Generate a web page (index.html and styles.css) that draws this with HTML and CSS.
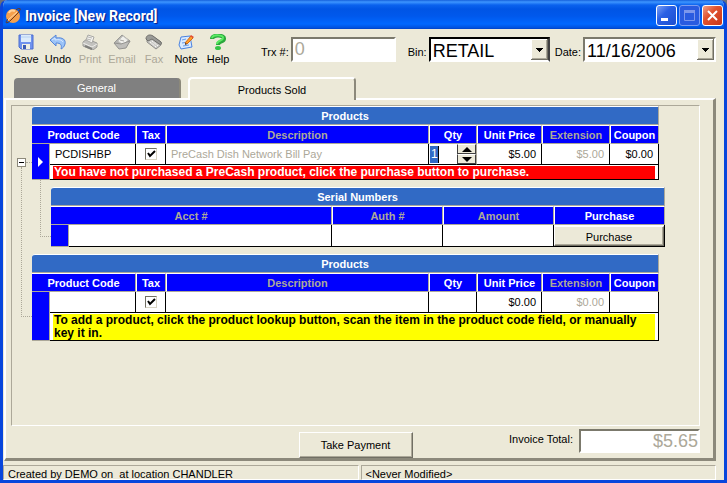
FILE: index.html
```html
<!DOCTYPE html>
<html lang="en">
<head>
    <meta charset="UTF-8">
    <meta name="viewport" content="width=device-width, initial-scale=1.0">
    <title>Invoice [New Record]</title>
    <link rel="stylesheet" href="styles.css">
</head>
<body>

    <div class="window">
        <header class="titlebar">
            <svg class="logo" width="16" height="16" viewBox="0 0 16 16">
                <circle cx="8" cy="8" r="7" fill="#f5a04c"/>
                <path d="M4 5c1-3 4-3 6-2" stroke="#ffd29a" stroke-width="2" fill="none"/>
                <path d="M3 11C-1 16 2 16 6 12L13 5c4-5 2-6-2-3" stroke="#6b3a1c" stroke-width="1" fill="none"/>
                <path d="M3 12L12 4" stroke="#ffd9a8" stroke-width="1"/>
            </svg>
            <h1>Invoice [New Record]</h1>
            <div class="window-buttons">
                <button class="win-btn" aria-label="Minimize">
                    <svg width="19" height="19" viewBox="0 0 19 19"><path d="M4 13.500h7" stroke="#fff" stroke-width="3"/></svg>
                </button>
                <button class="win-btn win-disabled" aria-label="Maximize" disabled>
                    <svg width="19" height="19" viewBox="0 0 19 19"><path d="M4.500 5v9.500h10V5" stroke="#7d97ec" fill="none"/><path d="M4 5.500h11" stroke="#7d97ec" stroke-width="3"/></svg>
                </button>
                <button class="win-btn win-close" aria-label="Close">
                    <svg width="19" height="19" viewBox="0 0 19 19"><path d="M5 5l9 9M14 5l-9 9" stroke="#fff" stroke-width="2"/></svg>
                </button>
            </div>
        </header>

        <!-- Toolbar -->
        <div class="toolbar">
            <div class="tools">
                <button class="tool">
                    <svg width="18" height="16" viewBox="0 0 18 16">
                        <path d="M2 1h14v14H4l-2-2z" fill="#6f92ee" stroke="#4a6cd0"/>
                        <path d="M4 1h10v7H4z" fill="#dcebfa"/>
                        <path d="M4 3h10" stroke="#b6d0f2"/>
                        <path d="M5 10h8v5H5z" fill="#f0efe2"/>
                        <path d="M6 11h3v4H6z" fill="#3a5ab4"/>
                    </svg>
                    Save
                </button>
                <button class="tool">
                    <svg width="18" height="16" viewBox="0 0 18 16">
                        <path d="M1 6l6-5v3c7-1 10 2 9 6-1 3-2 4-4 5 1-4 0-6-5-6v3z" fill="#9cc4f8" stroke="#5585d8"/>
                        <path d="M3 6l3-2v2c4-1 7 0 8 2" stroke="#d8e8ff" fill="none"/>
                    </svg>
                    Undo
                </button>
                <button class="tool" disabled>
                    <svg width="18" height="16" viewBox="0 0 18 16">
                        <path d="M2 8l4-3 10 4v4l-4 3-10-4z" fill="#b9b9b9" stroke="#888"/>
                        <path d="M5 6l2-5 6 2-2 6z" fill="#f5f5f5" stroke="#999"/>
                        <path d="M7 3l4 1M6 5l4 1" stroke="#aaa"/>
                        <path d="M2 9l9 4 5-3" stroke="#eee" fill="none"/>
                        <path d="M4 12l7 3" stroke="#666" stroke-width="2"/>
                    </svg>
                    Print
                </button>
                <button class="tool" disabled>
                    <svg width="18" height="16" viewBox="0 0 18 16">
                        <path d="M1 9l8-8 8 6-5 7z" fill="#a8a8a8" stroke="#888"/>
                        <path d="M5 7l5-5 5 4-5 5z" fill="#f2f2f2" stroke="#bbb"/>
                        <path d="M1 9l7 1 9-3-4 7-7 1z" fill="#b4b4b4" stroke="#808080"/>
                        <path d="M7 6l4 1" stroke="#999"/>
                    </svg>
                    Email
                </button>
                <button class="tool" disabled>
                    <svg width="18" height="16" viewBox="0 0 18 16">
                        <path d="M2 5l5-3 9 6v3l-5 4-9-7z" fill="#c4c4c4" stroke="#777"/>
                        <path d="M1 5c0-4 4-5 7-3l8 6c1 2 0 3-2 2L7 5 3 7z" fill="#888" stroke="#505050"/>
                        <path d="M5 8l6 5M7 7l6 5" stroke="#fff" stroke-dasharray="2 1"/>
                    </svg>
                    Fax
                </button>
                <button class="tool">
                    <svg width="18" height="16" viewBox="0 0 18 16">
                        <path d="M4 3l9-1 2 11-11 2-2-4z" fill="#d8eaff" stroke="#4a82df"/>
                        <path d="M5 6l4-1M5 9l6-1M6 12l6-1" stroke="#6a9be8"/>
                        <path d="M8 9L14 2l2 2-6 6z" fill="#ff9d2c" stroke="#d26a14"/>
                        <path d="M14 1l3 2-1 1-3-2z" fill="#e34a36"/>
                        <path d="M8 11v-2l2 1z" fill="#333"/>
                    </svg>
                    Note
                </button>
                <button class="tool">
                    <svg width="18" height="16" viewBox="0 0 18 16">
                        <path d="M3 5c0-5 13-4 12 0 0 3-6 2-6 6" stroke="#2aa83c" stroke-width="4" fill="none"/>
                        <path d="M3 4c1-4 12-3 11 0 0 3-6 2-6 6" stroke="#5bea63" stroke-width="2" fill="none"/>
                        <ellipse cx="9" cy="14" rx="3" ry="2" fill="#35c447"/>
                    </svg>
                    Help
                </button>
            </div>
            <div class="field field-trx">
                <label for="trx">Trx #:</label>
                <input type="text" id="trx" class="sunken big" value="0" disabled>
            </div>
            <div class="field field-bin">
                <label for="bin">Bin:</label>
                <select id="bin" class="sunken big"><option>RETAIL</option></select>
            </div>
            <div class="field field-date">
                <label for="date">Date:</label>
                <select id="date" class="sunken big"><option>11/16/2006</option></select>
            </div>
        </div>

        <!-- Tabs -->
        <div class="tabs">
            <button class="tab">General</button>
            <button class="tab tab-active">Products Sold</button>
        </div>

        <main class="panel">
            <div class="records">
                <div class="tree">
                    <div class="expand-row">
                        <button class="expander" aria-label="Collapse"></button>
                        <span class="stub"></span>
                    </div>
                    <div class="trunk"></div>
                </div>

                <div class="nodes">
                    <table class="grid products">
                        <caption>Products</caption>
                        <colgroup>
                            <col class="c-mark"><col class="c-code"><col class="c-tax"><col>
                            <col class="c-qty"><col class="c-price"><col class="c-ext"><col class="c-coupon">
                        </colgroup>
                        <thead>
                            <tr>
                                <th colspan="2">Product Code</th>
                                <th>Tax</th>
                                <th class="dim">Description</th>
                                <th>Qty</th>
                                <th>Unit Price</th>
                                <th class="dim">Extension</th>
                                <th>Coupon</th>
                            </tr>
                        </thead>
                        <tbody>
                            <tr>
                                <td class="mark" rowspan="2"><svg width="5" height="10" viewBox="0 0 5 10"><path d="M0 0l5 5-5 5z" fill="#fff"/></svg></td>
                                <td>PCDISHBP</td>
                                <td class="center"><input type="checkbox" aria-label="Tax" checked></td>
                                <td class="dim">PreCash Dish Network Bill Pay</td>
                                <td class="qty-cell">
                                    <div class="qty">
                                        <input type="text" aria-label="Qty" value="1">
                                        <div class="spin">
                                            <button aria-label="Increase"><svg width="10" height="5" viewBox="0 0 10 5"><path d="M0 5l5-5 5 5z"/></svg></button>
                                            <button aria-label="Decrease"><svg width="10" height="5" viewBox="0 0 10 5"><path d="M0 0h10l-5 5z"/></svg></button>
                                        </div>
                                    </div>
                                </td>
                                <td class="num">$5.00</td>
                                <td class="num dim">$5.00</td>
                                <td class="num">$0.00</td>
                            </tr>
                            <tr>
                                <td class="message" colspan="7"><p class="error">You have not purchased a PreCash product, click the purchase button to purchase.</p></td>
                            </tr>
                        </tbody>
                    </table>

                    <div class="child">
                        <div class="child-line"></div>
                        <table class="grid serials">
                            <caption>Serial Numbers</caption>
                            <colgroup>
                                <col class="c-mark"><col><col class="c-serial"><col class="c-serial"><col class="c-serial">
                            </colgroup>
                            <thead>
                                <tr>
                                    <th class="dim" colspan="2">Acct #</th>
                                    <th class="dim">Auth #</th>
                                    <th class="dim">Amount</th>
                                    <th>Purchase</th>
                                </tr>
                            </thead>
                            <tbody>
                                <tr>
                                    <td class="mark"></td>
                                    <td></td>
                                    <td></td>
                                    <td></td>
                                    <td class="button-cell"><button class="raised">Purchase</button></td>
                                </tr>
                            </tbody>
                        </table>
                    </div>

                    <table class="grid products">
                        <caption>Products</caption>
                        <colgroup>
                            <col class="c-mark"><col class="c-code"><col class="c-tax"><col>
                            <col class="c-qty"><col class="c-price"><col class="c-ext"><col class="c-coupon">
                        </colgroup>
                        <thead>
                            <tr>
                                <th colspan="2">Product Code</th>
                                <th>Tax</th>
                                <th class="dim">Description</th>
                                <th>Qty</th>
                                <th>Unit Price</th>
                                <th class="dim">Extension</th>
                                <th>Coupon</th>
                            </tr>
                        </thead>
                        <tbody>
                            <tr>
                                <td class="mark" rowspan="2"></td>
                                <td></td>
                                <td class="center"><input type="checkbox" aria-label="Tax" checked></td>
                                <td></td>
                                <td></td>
                                <td class="num">$0.00</td>
                                <td class="num dim">$0.00</td>
                                <td></td>
                            </tr>
                            <tr>
                                <td class="message" colspan="7"><p class="hint">To add a product, click the product lookup button, scan the item in the product code field, or manually key it in.</p></td>
                            </tr>
                        </tbody>
                    </table>
                </div>
            </div>

            <div class="payment">
                <button class="raised pay">Take Payment</button>
                <div class="total">
                    <label for="total">Invoice Total:</label>
                    <input type="text" id="total" class="sunken big" value="$5.65" disabled>
                </div>
            </div>
        </main>

        <footer class="statusbar">
            <span>Created by DEMO on&nbsp; at location CHANDLER</span>
            <span>&lt;Never Modified&gt;</span>
        </footer>
    </div>

</body>
</html>
```
FILE: styles.css
```css
* {
    box-sizing: border-box;
}

body {
    margin: 0;
    background-color: #6b6f78;
    font-family: "Liberation Sans", Arial, sans-serif;
    font-size: 11px;
    color: #000;
}

button, input, select {
    font: inherit;
    color: inherit;
    margin: 0;
    padding: 0;
    border-radius: 0;
}

p {
    margin: 0;
}

.window {
    display: flex;
    flex-direction: column;
    min-height: 100vh;
    background-color: #ece9d8;
    border: 3px solid #0846dc;
    border-top: none;
    border-radius: 7px 7px 0 0;
    overflow: hidden;
}

/* Title bar */
.titlebar {
    display: flex;
    align-items: center;
    gap: 4px;
    height: 29px;
    margin: 0 -3px;
    padding: 2px 4px 0 5px;
    background: linear-gradient(#1560dc 0, #3d95ff 2px, #0a62ee 5px, #0055e5 9px, #0058ec 16px, #0068ff 24px, #0050dc 28px, #0040c0 29px);
}

.titlebar h1 {
    flex: 1;
    margin: 0;
    font-family: Roboto, sans-serif;
    font-size: 14px;
    color: #fff;
    text-shadow: 1px 1px 1px #0a1883;
}

.window-buttons {
    display: flex;
    gap: 2px;
}

.win-btn {
    width: 21px;
    height: 21px;
    border: 1px solid #fff;
    border-radius: 3px;
    background: linear-gradient(135deg, #7ba0f5, #2a60e4 40%, #1c4fd0);
}

.win-btn svg {
    display: block;
}

.win-disabled {
    border-color: #7d9cf0;
    background: #2a5be0;
}

.win-close {
    background: linear-gradient(135deg, #f0a088, #e1522e 40%, #c8371a);
}

/* Toolbar */
.toolbar {
    display: flex;
    align-items: flex-start;
    height: 48px;
    padding: 5px 8px 0 7px;
}

.tools {
    display: flex;
}

.tool {
    display: flex;
    flex-direction: column;
    align-items: center;
    gap: 2px;
    width: 32px;
    border: none;
    background: none;
    line-height: 14px;
}

.tool:disabled {
    color: #aca899;
}

.tool:disabled svg {
    opacity: 0.8;
}

.field {
    display: flex;
    align-items: center;
    gap: 2px;
    margin-top: 3px;
}

.field-trx {
    margin-left: 27px;
}

.field-bin {
    margin-left: 12px;
}

.field-date {
    flex: 1;
    margin-left: 5px;
}

.field label {
    padding-top: 4px;
    white-space: nowrap;
}

.sunken {
    height: 25px;
    border: 2px solid;
    border-color: #7b796c #fff #fff #7b796c;
    background-color: #fff;
}

.big {
    font-size: 18px;
}

.big:disabled {
    color: #aca899;
    -webkit-text-fill-color: #aca899;
    opacity: 1;
}

.field input {
    width: 105px;
    padding: 0 2px;
}

.field select {
    appearance: none;
    padding: 2px 2px 0;
    outline: none;
    background-image: url("data:image/svg+xml,%3Csvg xmlns='http://www.w3.org/2000/svg' width='17' height='21'%3E%3Cpath d='M0 0h17v21H0z' fill='%23716f64'/%3E%3Cpath d='M0 0h16v20H0z' fill='%23fff'/%3E%3Cpath d='M1 1h15v19H1z' fill='%23aca899'/%3E%3Cpath d='M1 1h14v18H1z' fill='%23ece9d8'/%3E%3Cpath d='M5 9h7v1H5zM6 10h5v1H6zM7 11h3v1H7zM8 12h1v1H8z'/%3E%3C/svg%3E");
    background-repeat: no-repeat;
    background-position: right top;
}

.field-bin select {
    width: 121px;
    border-color: #000 #404040 #fff #000;
}

.field-date select {
    flex: 1;
    min-width: 0;
}

/* Tabs */
.tabs {
    display: flex;
    align-items: flex-end;
    gap: 7px;
    height: 21px;
    padding-left: 11px;
}

.tab {
    width: 167px;
    height: 20px;
    border: none;
    border-right: 2px solid #8c897b;
    border-radius: 4px 4px 0 0;
    background-color: #808080;
    color: #fff;
}

.tab-active {
    position: relative;
    width: 168px;
    height: 23px;
    margin-bottom: -2px;
    border: 2px solid #fff;
    border-right-color: #8c897b;
    border-bottom: none;
    background-color: #ece9d8;
    color: #000;
}

/* Panel */
.panel {
    flex: 1;
    display: flex;
    flex-direction: column;
    margin: 0 8px 4px 1px;
    border: 2px solid #fff;
    border-right: 3px solid #8c897b;
    border-bottom: 3px solid #8c897b;
    padding: 5px 13px 0 5px;
}

.records {
    flex: 1;
    display: flex;
    border: 1px solid;
    border-color: #aca899 #fff #fff #aca899;
    padding-right: 34px;
}

.tree {
    display: flex;
    flex-direction: column;
    width: 20px;
    height: 235px;
    padding: 52px 0 24px 5px;
}

.expand-row {
    display: flex;
    align-items: center;
}

.expander {
    width: 9px;
    height: 9px;
    border: 1px solid #8c897b;
    background: linear-gradient(#000, #000) center / 5px 1px no-repeat #fff;
}

.stub {
    flex: 1;
    border-top: 1px dotted #aca899;
}

.trunk {
    flex: 1;
    margin-left: 4px;
    border-left: 1px dotted #aca899;
    border-bottom: 1px dotted #aca899;
}

.nodes {
    flex: 1;
    min-width: 0;
}

.child {
    display: flex;
    padding: 7px 0;
}

.child-line {
    width: 11px;
    height: 57px;
    margin: -7px 0 0 8px;
    border-left: 1px dotted #aca899;
    border-bottom: 1px dotted #aca899;
}

/* Record grids */
.grid {
    table-layout: fixed;
    border-spacing: 0;
    width: 100%;
    line-height: 14px;
}

.products {
    width: calc(100% - 6px);
}

.serials {
    flex: 1;
    min-width: 0;
}

.grid caption {
    height: 19px;
    border-top: 1px solid #fff;
    border-right: 1px solid #aca899;
    border-bottom: 1px solid #aca899;
    border-top-left-radius: 3px;
    background-color: #316ac5;
    color: #fff;
    font-weight: bold;
    line-height: 18px;
}

.grid th {
    height: 19px;
    padding: 0;
    border-top: 1px solid #fff;
    border-left: 1px solid #fff;
    border-right: 1px solid #aca899;
    border-bottom: 1px solid #aca899;
    background-color: #0000ff;
    color: #fff;
}

.grid th:first-child {
    border-left: none;
}

.grid th.dim, .grid td.dim {
    color: #aca899;
}

.grid td {
    height: 21px;
    padding: 0 5px;
    border-right: 1px solid #000;
    border-bottom: 1px solid #000;
    background-color: #fff;
}

.serials td {
    height: 22px;
}

.grid td.mark {
    padding: 0 0 0 6px;
    border-color: #aca899;
    background-color: #0000ff;
}

.mark svg {
    display: block;
}

.grid td.center {
    text-align: center;
}

.grid td.num {
    text-align: right;
}

.grid td.message {
    height: 15px;
    padding: 1px 3px 0;
}

.grid td.button-cell {
    padding: 0;
}

.c-mark { width: 18px; }
.c-code { width: 86px; }
.c-tax { width: 30px; }
.c-qty { width: 48px; }
.c-price { width: 65px; }
.c-ext { width: 68px; }
.c-coupon { width: 49px; }
.c-serial { width: 111px; }

.error, .hint {
    padding-left: 1px;
    font-size: 12px;
    font-weight: bold;
    line-height: 13px;
}

.error {
    background-color: #ff0000;
    color: #fff;
}

.hint {
    background-color: #ffff00;
}

input[type="checkbox"] {
    display: block;
    appearance: none;
    width: 12px;
    height: 12px;
    margin: 0 auto;
    border: 1px solid;
    border-color: #716f64 #d8d4c4 #d8d4c4 #716f64;
    background-color: #fff;
}

input[type="checkbox"]:checked {
    background-image: url("data:image/svg+xml,%3Csvg xmlns='http://www.w3.org/2000/svg' width='10' height='10'%3E%3Cpath d='M2 4l2 3 5-5' stroke='%23000' stroke-width='2' fill='none'/%3E%3C/svg%3E");
}

.grid td.qty-cell {
    padding: 0;
    border-right-color: #aca899;
}

.qty {
    display: flex;
    justify-content: space-between;
    align-items: center;
    height: 20px;
    padding-left: 1px;
}

.qty input {
    width: 9px;
    height: 17px;
    border: none;
    border-right: 1px solid #000;
    padding-left: 1px;
    background-color: #316ac5;
    color: #fff;
    font-size: 12px;
}

.spin {
    display: flex;
    flex-direction: column;
    width: 19px;
}

.spin button {
    display: flex;
    align-items: center;
    justify-content: center;
    height: 10px;
    border: 1px solid;
    border-color: #fff #404040 #404040 #404040;
    background-color: #ece9d8;
}

.raised {
    border: 1px solid;
    border-color: #fff #716f64 #716f64 #fff;
    background-color: #ece9d8;
    box-shadow: inset -1px -1px #aca899;
}

.button-cell .raised {
    display: block;
    width: 100%;
    height: 20px;
    padding-top: 3px;
}

/* Payment row */
.payment {
    display: grid;
    grid-template-columns: 1fr 114px 1fr;
    align-items: start;
    padding-top: 3px;
}

.pay {
    grid-column: 2;
    height: 26px;
    margin-top: 3px;
}

.total {
    display: flex;
    justify-content: flex-end;
    gap: 6px;
}

.total label {
    padding-top: 4px;
}

.total input {
    width: 121px;
    height: 24px;
    text-align: right;
}

/* Status bar */
.statusbar {
    display: grid;
    grid-template-columns: 1fr 1fr;
    gap: 2px;
    margin-right: 8px;
}

.statusbar span {
    height: 15px;
    padding-left: 4px;
    border: 1px solid;
    border-color: #aca899 #fff #fff #aca899;
    line-height: 16px;
    white-space: nowrap;
}
```
